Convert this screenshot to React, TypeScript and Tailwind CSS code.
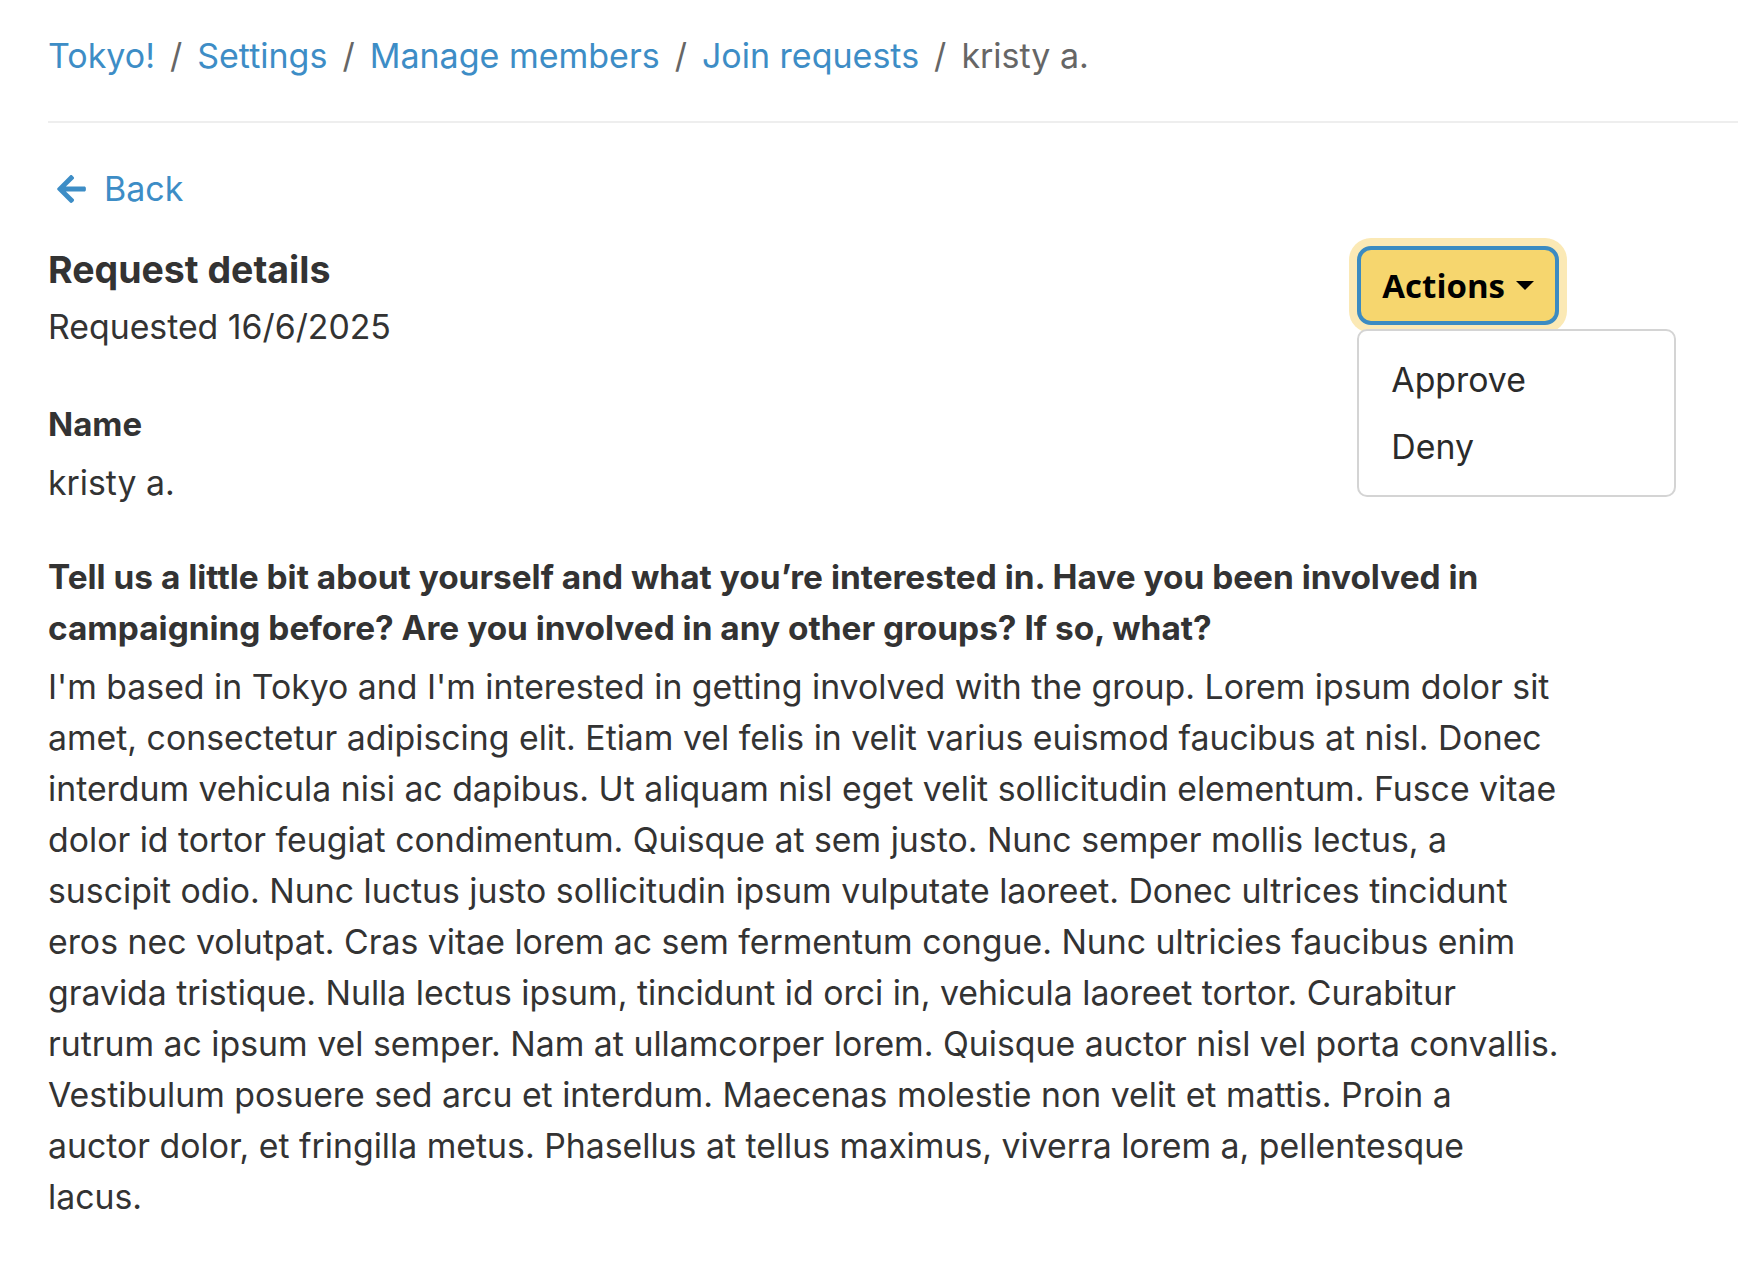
import { useState } from 'react';

const crumbs = ['Tokyo!', 'Settings', 'Manage members', 'Join requests'];

const body =
    "I'm based in Tokyo and I'm interested in getting involved with the group. Lorem ipsum dolor sit amet, consectetur adipiscing elit. Etiam vel felis in velit varius euismod faucibus at nisl. Donec interdum vehicula nisi ac dapibus. Ut aliquam nisl eget velit sollicitudin elementum. Fusce vitae dolor id tortor feugiat condimentum. Quisque at sem justo. Nunc semper mollis lectus, a suscipit odio. Nunc luctus justo sollicitudin ipsum vulputate laoreet. Donec ultrices tincidunt eros nec volutpat. Cras vitae lorem ac sem fermentum congue. Nunc ultricies faucibus enim gravida tristique. Nulla lectus ipsum, tincidunt id orci in, vehicula laoreet tortor. Curabitur rutrum ac ipsum vel semper. Nam at ullamcorper lorem. Quisque auctor nisl vel porta convallis. Vestibulum posuere sed arcu et interdum. Maecenas molestie non velit et mattis. Proin a auctor dolor, et fringilla metus. Phasellus at tellus maximus, viverra lorem a, pellentesque lacus.";

function ArrowLeft() {
    return (
        <svg viewBox="0 37 448 437" className="w-[29px] h-[28px] fill-[#3d8dc6]">
            <path d="M257.5 445.1l-22.2 22.2c-9.4 9.4-24.6 9.4-33.9 0L7 273c-9.4-9.4-9.4-24.6 0-33.9L201.4 44.7c9.4-9.4 24.6-9.4 33.9 0l22.2 22.2c9.5 9.5 9.3 25-.4 34.3L136.6 216H424c13.3 0 24 10.7 24 24v32c0 13.3-10.7 24-24 24H136.6l120.5 114.8c9.8 9.3 10 24.8.4 34.3z" />
        </svg>
    );
}

export default function App() {
    const [open, setOpen] = useState(true);

    return (
        <div className="min-h-screen bg-white text-[#333] font-['Inter','Noto_Sans',sans-serif] pl-[48px]">
            {/* Breadcrumb */}
            <nav className="pt-[30px] h-[81px] flex items-center gap-[15px] text-[34px] leading-[51px]">
                {crumbs.map((c) => (
                    <span key={c} className="flex items-center gap-[15px]">
                        <a href="#" className="text-[#3d8dc6]">{c}</a>
                        <span className="text-[#666]">/</span>
                    </span>
                ))}
                <span className="text-[#666]">kristy a.</span>
            </nav>
            <div className="mt-[40px] h-[2px] bg-[#eeeeee]" />

            <div className="w-[1512px]">
                {/* Back */}
                <a href="#" className="mt-[40px] flex items-center gap-[18px] pl-[9px] h-[51px] text-[34px] text-[#3d8dc6]">
                    <ArrowLeft />
                    Back
                </a>

                <div className="mt-[32px] flex justify-between items-start">
                    <div>
                        <h2 className="text-[37.5px] leading-[48px] font-bold">Request details</h2>
                        <p className="mt-[7px] text-[33.8px] leading-[51px]">Requested 16/6/2025</p>
                    </div>

                    <div className="relative mr-[1px]">
                        <button
                            onClick={() => setOpen(!open)}
                            className="flex items-center gap-[11px] h-[79px] px-[21px] rounded-[14px] bg-[#f6d66e] border-[4px] border-[#3b8bc2] ring-[8px] ring-[#fbe9b5] text-[33px] font-bold text-black font-['Open_Sans',sans-serif]"
                        >
                            Actions
                            <span className="w-0 h-0 border-l-[9px] border-r-[9px] border-t-[9px] border-l-transparent border-r-transparent border-t-black" />
                        </button>
                        {open && (
                            <div className="absolute left-0 top-[83px] w-[319px] py-[15px] bg-white border-2 border-[#d4d4d4] rounded-[10px] text-[33.8px] text-[#2b2b2b]">
                                <div className="px-[32px] py-[8px] leading-[51px]">Approve</div>
                                <div className="px-[32px] py-[8px] leading-[51px]">Deny</div>
                            </div>
                        )}
                    </div>
                </div>

                <div className="mt-[47px] text-[33.8px] leading-[51px]">
                    <div className="font-bold text-[33px]">Name</div>
                    <div className="mt-[7px]">kristy a.</div>
                </div>

                <div className="mt-[44px] text-[33.8px] leading-[51px]">
                    <div className="font-bold text-[33.4px]">
                        Tell us a little bit about yourself and what you’re interested in. Have you been involved in campaigning before? Are you involved in any other groups? If so, what?
                    </div>
                    <p className="mt-[7px]">{body}</p>
                </div>
            </div>
        </div>
    );
}
